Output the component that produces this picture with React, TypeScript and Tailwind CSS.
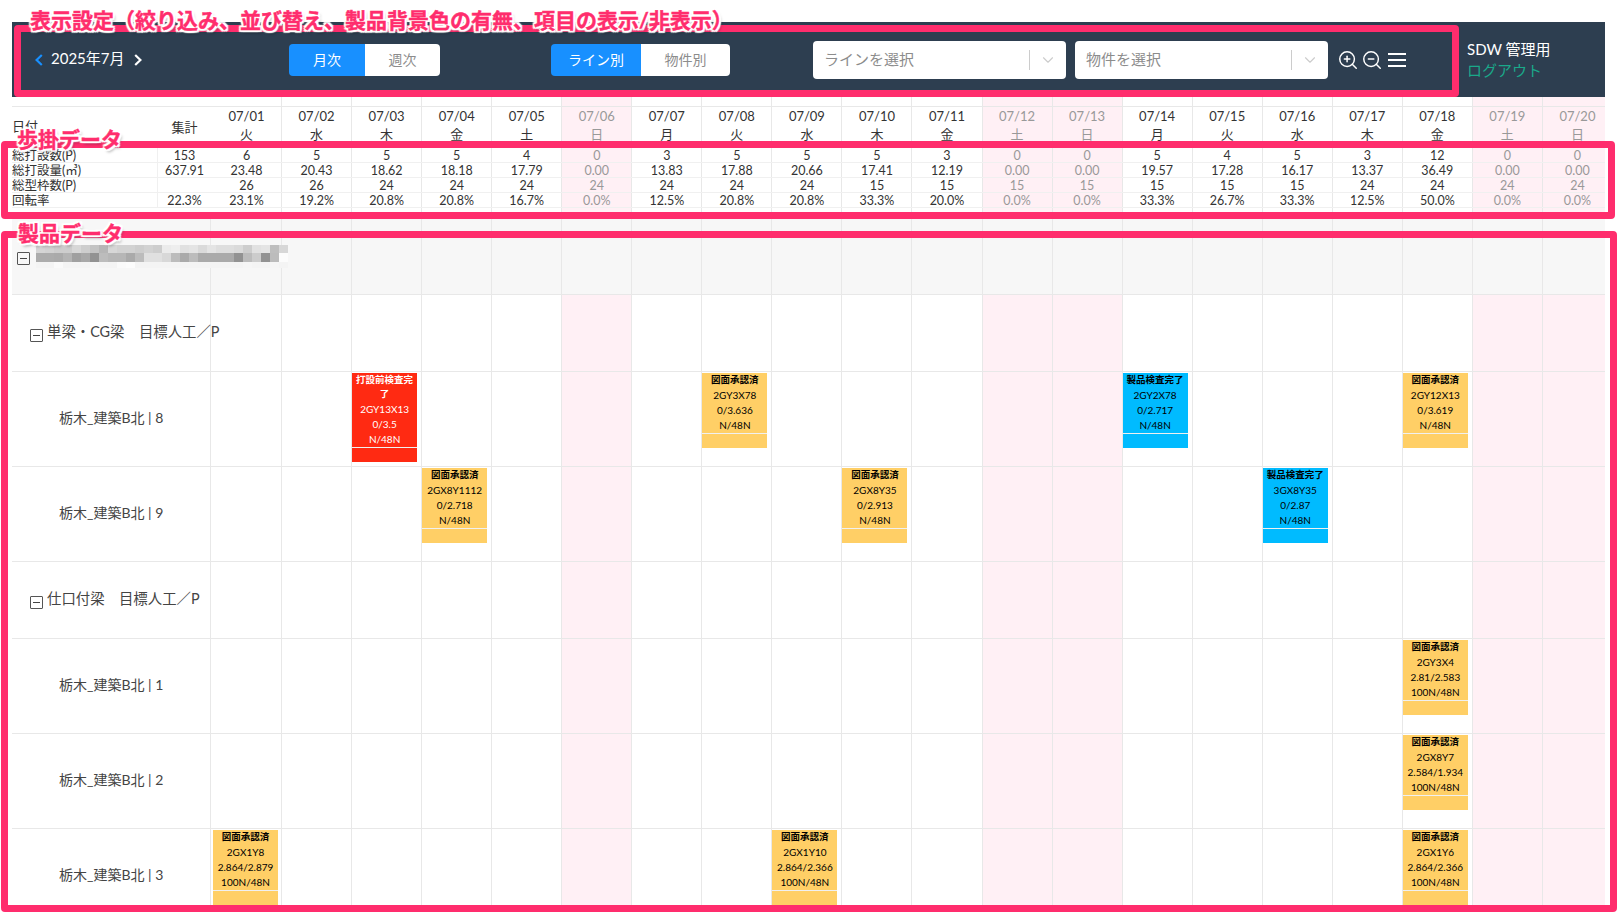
import { ChevronDown, ZoomIn, ZoomOut } from 'lucide-react';

type Card = { day: number; kind: 'red' | 'yellow' | 'blue'; title: string; lines: string[] };

const dates = Array.from({ length: 20 }, (_, i) => `07/${String(i + 1).padStart(2, '0')}`);
const weekdays = ['火', '水', '木', '金', '土', '日', '月'];
const isOff = (i: number) => [5, 11, 12, 18, 19].includes(i);

const stats = [
  { label: '総打設数(P)', total: '153', values: ['6', '5', '5', '5', '4', '0', '3', '5', '5', '5', '3', '0', '0', '5', '4', '5', '3', '12', '0', '0'] },
  { label: '総打設量(㎥)', total: '637.91', values: ['23.48', '20.43', '18.62', '18.18', '17.79', '0.00', '13.83', '17.88', '20.66', '17.41', '12.19', '0.00', '0.00', '19.57', '17.28', '16.17', '13.37', '36.49', '0.00', '0.00'] },
  { label: '総型枠数(P)', total: '', values: ['26', '26', '24', '24', '24', '24', '24', '24', '24', '15', '15', '15', '15', '15', '15', '15', '24', '24', '24', '24'] },
  { label: '回転率', total: '22.3%', values: ['23.1%', '19.2%', '20.8%', '20.8%', '16.7%', '0.0%', '12.5%', '20.8%', '20.8%', '33.3%', '20.0%', '0.0%', '0.0%', '33.3%', '26.7%', '33.3%', '12.5%', '50.0%', '0.0%', '0.0%'] },
];

const cardStyles = {
  red: 'bg-[#ff2a12] text-white',
  yellow: 'bg-[#ffcf66] text-black',
  blue: 'bg-[#00bbff] text-black',
};

const rows: { type: 'cat' | 'line'; label: string; cards?: Card[] }[] = [
  { type: 'cat', label: '単梁・CG梁　目標人工／P' },
  {
    type: 'line',
    label: '栃木_建築B北 | 8',
    cards: [
      { day: 2, kind: 'red', title: '打設前検査完了', lines: ['2GY13X13', '0/3.5', 'N/48N'] },
      { day: 7, kind: 'yellow', title: '図面承認済', lines: ['2GY3X78', '0/3.636', 'N/48N'] },
      { day: 13, kind: 'blue', title: '製品検査完了', lines: ['2GY2X78', '0/2.717', 'N/48N'] },
      { day: 17, kind: 'yellow', title: '図面承認済', lines: ['2GY12X13', '0/3.619', 'N/48N'] },
    ],
  },
  {
    type: 'line',
    label: '栃木_建築B北 | 9',
    cards: [
      { day: 3, kind: 'yellow', title: '図面承認済', lines: ['2GX8Y1112', '0/2.718', 'N/48N'] },
      { day: 9, kind: 'yellow', title: '図面承認済', lines: ['2GX8Y35', '0/2.913', 'N/48N'] },
      { day: 15, kind: 'blue', title: '製品検査完了', lines: ['3GX8Y35', '0/2.87', 'N/48N'] },
    ],
  },
  { type: 'cat', label: '仕口付梁　目標人工／P' },
  {
    type: 'line',
    label: '栃木_建築B北 | 1',
    cards: [{ day: 17, kind: 'yellow', title: '図面承認済', lines: ['2GY3X4', '2.81/2.583', '100N/48N'] }],
  },
  {
    type: 'line',
    label: '栃木_建築B北 | 2',
    cards: [{ day: 17, kind: 'yellow', title: '図面承認済', lines: ['2GX8Y7', '2.584/1.934', '100N/48N'] }],
  },
  {
    type: 'line',
    label: '栃木_建築B北 | 3',
    cards: [
      { day: 0, kind: 'yellow', title: '図面承認済', lines: ['2GX1Y8', '2.864/2.879', '100N/48N'] },
      { day: 8, kind: 'yellow', title: '図面承認済', lines: ['2GX1Y10', '2.864/2.366', '100N/48N'] },
      { day: 17, kind: 'yellow', title: '図面承認済', lines: ['2GX1Y6', '2.864/2.366', '100N/48N'] },
    ],
  },
];

// 伏せ字部分のモザイク
const mosaicHeights = ['h-[8px]', 'h-[9px]', 'h-[6px]'];
const mosaic = [
  [213, 210, 205, 205, 215, 205, 195, 182, 215, 210, 210, 205, 210, 205, 235, 238, 225, 228, 218, 228, 222, 222, 218, 205, 225, 228, 190, 215],
  [172, 172, 170, 180, 160, 168, 146, 188, 182, 182, 170, 188, 224, 224, 216, 188, 170, 188, 170, 170, 170, 170, 146, 188, 204, 146, 188, 252],
  [244, 244, 250, 244, 244, 244, 246, 244, 244, 250, 252, 244, 244, 244, 244, 244, 244, 244, 244, 244, 244, 244, 244, 246, 244, 244, 246, 244],
];

const labelClass =
  "absolute z-30 whitespace-nowrap text-[21px] leading-[26px] font-bold text-[#ff2d6d] [-webkit-text-stroke:0.4px_#ff2d6d] [text-shadow:0_0_2px_#fff,0_0_2px_#fff,2px_2px_1px_#fff,-2px_-2px_1px_#fff,2px_-2px_1px_#fff,-2px_2px_1px_#fff,2px_0_1px_#fff,-2px_0_1px_#fff,0_2px_1px_#fff,0_-2px_1px_#fff,2px_3px_3px_rgba(0,0,0,0.35)]";

function MinusBox() {
  return (
    <span className="flex h-[13px] w-[13px] shrink-0 items-center justify-center rounded-[1px] border border-[#555]">
      <span className="h-px w-[7px] bg-[#444]" />
    </span>
  );
}

function DayCells({ card }: { card?: Card[] }) {
  return (
    <>
      {dates.map((_, i) => {
        const found = card?.find((c) => c.day === i);
        return (
          <div
            key={i}
            className={`w-[70.05px] shrink-0 border-l ${i === 0 ? 'border-l-transparent pl-px' : 'border-l-[#e8e8e8]'} ${isOff(i) ? 'bg-[#fff0f5]' : ''}`}
          >
            {found && <ScheduleCard card={found} />}
          </div>
        );
      })}
    </>
  );
}

function ScheduleCard({ card }: { card: Card }) {
  return (
    <div className={`mt-px w-[65px] text-center text-[10px] ${cardStyles[card.kind]}`}>
      <div className="px-0.5 pb-px text-[9.5px] leading-[14px] font-bold">{card.title}</div>
      {card.lines.map((l) => (
        <div key={l} className="h-[15px] whitespace-nowrap leading-[14px]">
          {l}
        </div>
      ))}
      <div className="h-[15px] border-t border-t-[#f0f0f0]" />
    </div>
  );
}

function Toggle({ left, right, leftW, rightW }: { left: string; right: string; leftW: string; rightW: string }) {
  return (
    <div className="flex h-8 overflow-hidden rounded text-[14px] leading-8">
      <div className={`${leftW} bg-[#1890ff] text-center text-white`}>{left}</div>
      <div className={`${rightW} bg-white text-center text-[#8c8c8c]`}>{right}</div>
    </div>
  );
}

function SelectBox({ placeholder }: { placeholder: string }) {
  return (
    <div className="flex h-[38px] w-[253px] items-center rounded-[4px] bg-white pl-[11px] text-[15px] text-[#8c8c8c]">
      <span className="flex-1">{placeholder}</span>
      <span className="h-5 w-px bg-[#ccc]" />
      <span className="flex w-9 justify-center">
        <ChevronDown size={18} strokeWidth={1.5} className="text-[#ccc]" />
      </span>
    </div>
  );
}

export default function App() {
  return (
    <div className="relative h-[912px] w-[1617px] overflow-hidden bg-white pt-[22px] font-[Lato,'Noto_Sans_CJK_JP',sans-serif] text-[#333]">
      <div className="ml-3 w-[1593px] overflow-hidden">
        {/* Header */}
        <div className="flex h-[75px] items-center bg-[#2d3e50] text-[15px] text-white">
          <div className="flex w-[277px] shrink-0 items-center pl-[23px]">
            <svg width="8" height="12" viewBox="0 0 8 12" className="text-[#1890ff]">
              <path d="M6.8 1 1.6 6l5.2 5" fill="none" stroke="currentColor" strokeWidth="2.2" />
            </svg>
            <span className="ml-[8px] -translate-y-px">2025年7月</span>
            <svg width="8" height="12" viewBox="0 0 8 12" className="ml-[9px] text-white">
              <path d="M1.2 1 6.4 6l-5.2 5" fill="none" stroke="currentColor" strokeWidth="2.2" />
            </svg>
          </div>
          <Toggle left="月次" right="週次" leftW="w-[76px]" rightW="w-[75px]" />
          <div className="w-[111px] shrink-0" />
          <Toggle left="ライン別" right="物件別" leftW="w-[90px]" rightW="w-[89px]" />
          <div className="flex shrink-0 items-center gap-[9px] pl-[83px]">
            <SelectBox placeholder="ラインを選択" />
            <SelectBox placeholder="物件を選択" />
          </div>
          <div className="ml-[9px] flex items-center gap-[2px] text-white">
            <ZoomIn size={22} strokeWidth={1.6} />
            <ZoomOut size={22} strokeWidth={1.6} />
            <svg width="20" height="16" viewBox="0 0 20 16" className="ml-0.5">
              <path d="M1 2h18M1 8h18M1 14h18" stroke="currentColor" strokeWidth="2" />
            </svg>
          </div>
          <div className="ml-[60px] whitespace-nowrap leading-[21px]">
            <div>SDW 管理用</div>
            <div className="text-[#1aa98a]">ログアウト</div>
          </div>
        </div>

        {/* Date spacer */}
        <div className="flex h-[9px]">
          <div className="w-[199px] shrink-0" />
          <DayCells />
        </div>

        {/* Date header */}
        <div className="flex h-[42px] border-t border-t-[#e8e8e8] text-[13px] leading-[18px]">
          <div className="w-[146px] shrink-0 pt-[10px]">日付</div>
          <div className="w-[53px] shrink-0 pt-[11px] text-center">集計</div>
          {dates.map((d, i) => (
            <div
              key={d}
              className={`w-[70.05px] shrink-0 border-l text-center ${i === 0 ? 'border-l-transparent' : 'border-l-[#e8e8e8]'} ${isOff(i) ? 'bg-[#fff0f5] text-[#999]' : ''}`}
            >
              <div>{d}</div>
              <div>{weekdays[i % 7]}</div>
            </div>
          ))}
        </div>

        {/* Stat rows */}
        {stats.map((s) => (
          <div key={s.label} className="flex h-[15px] border-b border-b-[#f0f0f0] text-[12.5px] leading-[15px]">
            <div className="w-[146px] shrink-0 border-r border-r-[#f0f0f0]">{s.label}</div>
            <div className="w-[53px] shrink-0 text-center">{s.total}</div>
            {s.values.map((v, i) => (
              <div
                key={i}
                className={`w-[70.05px] shrink-0 border-l text-center ${i === 0 ? 'border-l-transparent' : 'border-l-[#e8e8e8]'} ${isOff(i) ? 'bg-[#fff0f5] text-[#999]' : ''}`}
              >
                {v}
              </div>
            ))}
          </div>
        ))}
        <div className="flex h-[5px]">
          <div className="w-[199px] shrink-0" />
          <DayCells />
        </div>

        {/* Group row */}
        <div className="flex h-[82px] border-b border-b-[#e8e8e8] bg-[#f7f7f7]">
          <div className="relative z-10 flex h-full w-[199px] shrink-0 border-r border-r-[#e8e8e8] pt-[32px] pl-[5px]">
            <div className="pt-[7px]">
              <MinusBox />
            </div>
            <div className="ml-[6px] flex shrink-0 flex-col">
              {mosaic.map((row, r) => (
                <div key={r} className={`flex shrink-0 ${mosaicHeights[r]}`}>
                  {row.map((g, c) => (
                    <span
                      key={c}
                      className="w-[9px] shrink-0"
                      style={{ backgroundColor: `rgb(${g},${g},${g})` }}
                    />
                  ))}
                </div>
              ))}
            </div>
          </div>
          {dates.map((d, i) => (
            <div key={d} className={`w-[70.05px] shrink-0 ${i === 0 ? '' : 'border-l border-l-[#e8e8e8]'}`} />
          ))}
        </div>

        {/* Product rows */}
        {rows.map((row) => (
          <div key={row.label} className={`flex border-b border-b-[#e8e8e8] ${row.type === 'cat' ? 'h-[77px]' : 'h-[95px]'}`}>
            <div className="relative z-10 flex h-full w-[199px] shrink-0 items-center whitespace-nowrap border-r border-r-[#e8e8e8] text-[14px] text-[#444]">
              {row.type === 'cat' ? (
                <div className="flex items-center pl-[18px]">
                  <span className="translate-y-[3px]">
                    <MinusBox />
                  </span>
                  <span className="ml-[4px] -translate-y-px text-[14.4px]">{row.label}</span>
                </div>
              ) : (
                <span className="-translate-y-[2px] pl-[47px]">{row.label}</span>
              )}
            </div>
            <DayCells card={row.cards} />
          </div>
        ))}
      </div>

      {/* Annotations */}
      <div className="absolute top-[25px] left-[14px] z-20 h-[72px] w-[1445px] rounded-[4px] border-[7px] border-[#ff2d6d]" />
      <div className="absolute top-[141px] left-px z-20 h-[78px] w-[1614px] rounded-[4px] border-[7px] border-[#ff2d6d]" />
      <div className="absolute top-[231px] left-px z-20 h-[681px] w-[1616px] rounded-[4px] border-[7px] border-[#ff2d6d]" />
      <div className={`${labelClass} top-[7px] left-[30px]`}>表示設定（絞り込み、並び替え、製品背景色の有無、項目の表示/非表示）</div>
      <div className={`${labelClass} top-[126px] left-[17px]`}>歩掛データ</div>
      <div className={`${labelClass} top-[220px] left-[18px]`}>製品データ</div>
    </div>
  );
}
